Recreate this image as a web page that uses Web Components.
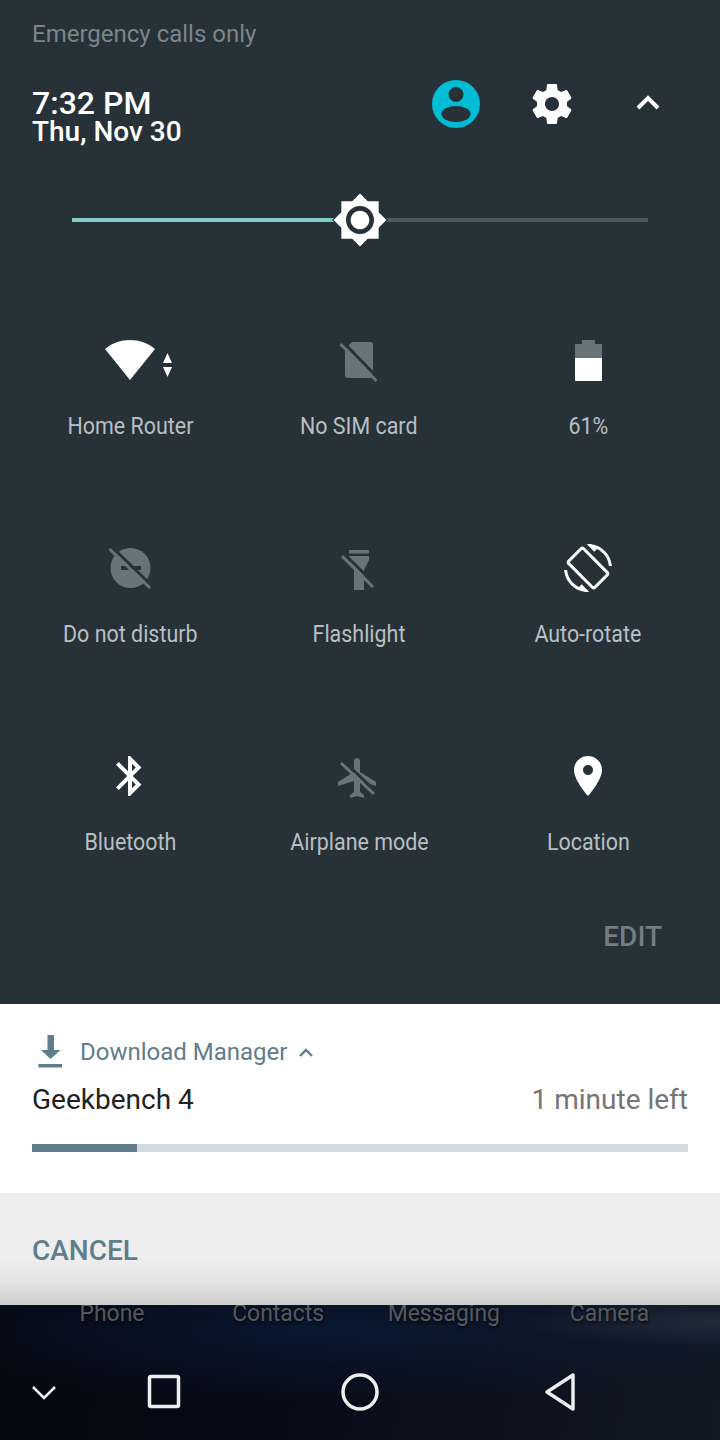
<!DOCTYPE html>
<html lang="en">
<head>
<meta charset="UTF-8">
<title>Quick settings</title>
<style>
  html, body { margin: 0; padding: 0; background: #05080f; }
  body { width: 720px; height: 1440px; overflow: hidden; font-family: Roboto, "Liberation Sans", sans-serif; }
  svg { display: block; }
</style>
</head>
<body>
<notification-shade>
  <qs-header slot="header"></qs-header>
  <brightness-slider slot="brightness" value="50"></brightness-slider>

  <qs-tile label="Home Router">
    <svg width="96" height="48" viewBox="0 0 96 48"><path fill="#fff" d="M23 13C30 7 39 4 48 4s18 3 25 9L48 44z"/><path fill="#fff" d="M81 27l4.500-10 4.500 10zM81 31h9l-4.500 10z"/></svg>
  </qs-tile>
  <qs-tile label="No SIM card" off>
    <svg width="48" height="48" viewBox="0 0 48 48"><path fill="#69747a" d="M17 6h18a3 3 0 0 1 3 3v30a3 3 0 0 1-3 3H13a3 3 0 0 1-3-3V13z"/><path stroke="#263238" stroke-width="3" d="M8 6l36 37"/><path stroke="#69747a" stroke-width="3" d="M5.500 8l36 37"/></svg>
  </qs-tile>
  <qs-tile label="61%">
    <svg width="48" height="48" viewBox="0 0 48 48"><path fill="#69747a" d="M18 4h13v4h7v14H11V8h7z"/><rect fill="#fff" x="11" y="22" width="27" height="23"/></svg>
  </qs-tile>

  <qs-tile label="Do not disturb" off>
    <svg width="48" height="48" viewBox="0 0 48 48"><circle fill="#69747a" cx="24.500" cy="24" r="20"/><path fill="#263238" d="M15 22h20v4H15z"/><path stroke="#263238" stroke-width="3" d="M6 3l40 39"/><path stroke="#69747a" stroke-width="3" d="M3.500 5l40.500 39"/></svg>
  </qs-tile>
  <qs-tile label="Flashlight" off>
    <svg width="48" height="48" viewBox="0 0 48 48"><path fill="#69747a" d="M14 6h20v3.500H14zM14 12h20v4l-5 10v20H19V26l-5-10z"/><path stroke="#263238" stroke-width="3" d="M9.500 10l31 31"/><path stroke="#69747a" stroke-width="3" d="M7 12l31 31"/></svg>
  </qs-tile>
  <qs-tile label="Auto-rotate">
    <svg width="48" height="48" viewBox="0 0 24 24"><path fill="#fff" d="M16.480 2.520c3.270 1.550 5.610 4.720 5.970 8.480h1.500C23.440 4.840 18.290 0 12 0l-.66.03 3.810 3.810 1.330-1.320zm-6.250-.77c-.59-.59-1.540-.59-2.120 0L1.750 8.110c-.59.59-.59 1.540 0 2.120l12.020 12.020c.59.59 1.540.59 2.120 0l6.360-6.360c.59-.59.59-1.540 0-2.120L10.230 1.750zm4.600 19.440L2.810 9.170l6.360-6.360 12.020 12.020-6.360 6.360zm-7.310.29C4.250 19.940 1.910 16.760 1.550 13H.05C.56 19.160 5.710 24 12 24l.66-.03-3.810-3.810-1.330 1.320z"/></svg>
  </qs-tile>

  <qs-tile label="Bluetooth">
    <svg width="48" height="48" viewBox="0 0 24 24"><path fill="#fff" d="M17.710 7.710L12 2h-1v7.590L6.410 5 5 6.410 10.590 12 5 17.590 6.410 19 11 14.410V22h1l5.710-5.710-4.300-4.290 4.300-4.290zM13 5.830l1.880 1.880L13 9.590V5.830zm1.880 10.460L13 18.170v-3.760l1.880 1.880z"/></svg>
  </qs-tile>
  <qs-tile label="Airplane mode" off>
    <svg width="48" height="48" viewBox="0 0 48 48"><path transform="translate(-1 2) scale(2)" fill="#69747a" d="M21 16v-2l-8-5V3.500c0-.83-.67-1.500-1.500-1.500S10 2.670 10 3.500V9l-8 5v2l8-2.500V19l-2 1.500V22l3.500-1 3.500 1v-1.500L13 19v-5.500l8 2.500z"/><path stroke="#263238" stroke-width="3" d="M8.500 9l33 31"/><path stroke="#69747a" stroke-width="3" d="M6 11l33 31"/></svg>
  </qs-tile>
  <qs-tile label="Location">
    <svg width="48" height="48" viewBox="0 0 24 24"><path fill="#fff" d="M12 2C8.130 2 5 5.130 5 9c0 5.250 7 13 7 13s7-7.750 7-13c0-3.870-3.130-7-7-7zm0 9.500c-1.380 0-2.500-1.120-2.500-2.500s1.120-2.500 2.500-2.500 2.500 1.120 2.500 2.500-1.120 2.500-2.500 2.500z"/></svg>
  </qs-tile>
</notification-shade>

<download-card app="Download Manager" title="Geekbench 4" eta="1 minute left" progress="16"></download-card>
<card-actions>CANCEL</card-actions>
<home-strip></home-strip>

<script>
// status line, clock and the three header buttons
class QsHeader extends HTMLElement {
  constructor() {
    super();
    const shadow = this.attachShadow({mode: 'open'});
    shadow.innerHTML = `
      <style>
        :host { display: block; height: 168px; box-sizing: border-box; padding: 18px 32px 0; }
        .carrier { font-size: 24px; line-height: 32px; color: #7b858a; }
        .row { display: flex; align-items: flex-start; margin-top: 30px; }
        .clock { flex: 1; color: #fff; padding-top: 8px; font-weight: 500; }
        .time { font-size: 32px; line-height: 30px; }
        .date { font-size: 28px; line-height: 28px; }
        .btns { display: flex; margin-right: -8px; }
        .btns div { width: 96px; height: 48px; display: flex; justify-content: center; }
      </style>
      <div class="carrier">Emergency calls only</div>
      <div class="row">
        <div class="clock">
          <div class="time">7:32 PM</div>
          <div class="date">Thu, Nov 30</div>
        </div>
        <div class="btns">
          <div><svg width="48" height="48" viewBox="0 0 48 48"><circle cx="24" cy="24" r="24" fill="#00bcd4"/><circle cx="24" cy="14.500" r="7.500" fill="#263238"/><ellipse cx="24" cy="34" rx="14.500" ry="8" fill="#263238"/></svg></div>
          <div><svg width="48" height="48" viewBox="0 0 24 24"><path fill="#fff" d="M19.430 12.980c.04-.32.07-.64.07-.98s-.03-.66-.07-.98l2.110-1.650c.19-.15.24-.42.12-.64l-2-3.460c-.12-.22-.39-.3-.61-.22l-2.490 1c-.52-.4-1.080-.73-1.690-.98l-.38-2.650C14.460 2.180 14.250 2 14 2h-4c-.25 0-.46.18-.49.42l-.38 2.650c-.61.25-1.170.59-1.690.98l-2.490-1c-.23-.09-.49 0-.61.22l-2 3.460c-.13.22-.07.49.12.64l2.110 1.650c-.04.32-.07.65-.07.98s.03.66.07.98l-2.110 1.650c-.19.15-.24.42-.12.64l2 3.460c.12.22.39.3.61.22l2.490-1c.52.4 1.080.73 1.690.98l.38 2.650c.03.24.24.42.49.42h4c.25 0 .46-.18.49-.42l.38-2.650c.61-.25 1.170-.59 1.690-.98l2.490 1c.23.09.49 0 .61-.22l2-3.460c.12-.22.07-.49-.12-.64l-2.110-1.650zM12 15.500c-1.930 0-3.500-1.570-3.500-3.500s1.570-3.500 3.500-3.500 3.500 1.570 3.500 3.500-1.570 3.500-3.500 3.500z"/></svg></div>
          <div><svg width="48" height="48" viewBox="0 0 48 48"><path fill="none" stroke="#fff" stroke-width="4" d="M14 28l10-10 10 10"/></svg></div>
        </div>
      </div>`;
  }
}

class BrightnessSlider extends HTMLElement {
  constructor() {
    super();
    const shadow = this.attachShadow({mode: 'open'});
    const value = this.getAttribute('value') || 0;
    shadow.innerHTML = `
      <style>
        :host { display: block; padding: 50px 72px 0; height: 104px; box-sizing: border-box; }
        .track { position: relative; height: 4px; background: #4f5a60; }
        .fill { height: 100%; background: #80cbc4; width: ${value}%; }
        svg { position: absolute; left: ${value}%; top: 50%; transform: translate(-50%, -50%); }
      </style>
      <div class="track"><div class="fill"></div>
        <svg width="56" height="56" viewBox="0 0 24 24"><path fill="#263238" d="M12 0L24 12 12 24 0 12z"/><path fill="#fff" d="M20 8.690V4h-4.690L12 .69 8.690 4H4v4.690L.69 12 4 15.310V20h4.690L12 23.310 15.310 20H20v-4.690L23.310 12 20 8.690zM12 18c-3.310 0-6-2.690-6-6s2.690-6 6-6 6 2.690 6 6-2.690 6-6 6zm0-10c-2.210 0-4 1.790-4 4s1.790 4 4 4 4-1.790 4-4-1.790-4-4-4z"/></svg>
      </div>`;
  }
}

class QsTile extends HTMLElement {
  constructor() {
    super();
    const shadow = this.attachShadow({mode: 'open'});
    shadow.innerHTML = `
      <style>
        :host { display: flex; flex-direction: column; align-items: center; height: 208px; }
        .icon { height: 48px; display: flex; justify-content: center; }
        .label { margin-top: 26px; font-size: 24px; line-height: 32px; color: #b9bfc2; white-space: nowrap; transform: scaleX(.893); }
      </style>
      <div class="icon"><slot></slot></div>
      <div class="label">${this.getAttribute('label')}</div>`;
  }
}

class NotificationShade extends HTMLElement {
  constructor() {
    super();
    const shadow = this.attachShadow({mode: 'open'});
    shadow.innerHTML = `
      <style>
        :host { display: block; height: 1004px; background: #263238; overflow: hidden; }
        .grid { display: grid; grid-template-columns: 228px 230px 228px; padding: 64px 0 0 16px; }
        .edit { font-size: 28px; font-weight: 500; line-height: 32px; color: #737d83; text-align: right; padding: 5px 58px 0 0; margin-top: -44px; }
      </style>
      <slot name="header"></slot>
      <slot name="brightness"></slot>
      <div class="grid"><slot></slot></div>
      <div class="edit">EDIT</div>`;
  }
}

class DownloadCard extends HTMLElement {
  constructor() {
    super();
    const shadow = this.attachShadow({mode: 'open'});
    const g = n => this.getAttribute(n);
    shadow.innerHTML = `
      <style>
        :host { display: block; height: 189px; box-sizing: border-box; background: #fff; padding: 30px 32px 0; }
        .app { display: flex; align-items: center; height: 36px; color: #607d8b; font-size: 24px; }
        .app .name { margin-left: 12px; }
        .app .caret { margin-left: 10px; }
        .main { display: flex; justify-content: space-between; margin-top: 10px; font-size: 28px; line-height: 40px; }
        .title { color: #212121; }
        .eta { color: #757575; }
        .bar { margin-top: 24px; height: 8px; background: #d3dbde; }
        .bar div { height: 100%; width: ${g('progress')}%; background: #607d8b; }
      </style>
      <div class="app">
        <svg width="36" height="36" viewBox="0 0 36 36"><path fill="#607d8b" d="M15.500 1H22v15h6.500L18.500 25 9 16h6.500zM6.500 30H30v3.500H6.500z"/></svg>
        <span class="name">${g('app')}</span>
        <svg class="caret" width="18" height="18" viewBox="0 0 18 18"><path fill="none" stroke="#607d8b" stroke-width="2.400" d="M3 13l6-6 6 6"/></svg>
      </div>
      <div class="main"><span class="title">${g('title')}</span><span class="eta">${g('eta')}</span></div>
      <div class="bar"><div></div></div>`;
  }
}

class CardActions extends HTMLElement {
  constructor() {
    super();
    const shadow = this.attachShadow({mode: 'open'});
    shadow.innerHTML = `
      <style>
        :host { display: block; height: 112px; box-sizing: border-box; padding: 42px 32px 0;
          background: linear-gradient(#eeeeee 0, #eeeeee 58%, #e4e4e4 78%, #cfcfcf 100%);
          color: #607d8b; font-size: 28px; font-weight: 500; line-height: 32px; }
      </style>
      <slot></slot>`;
  }
}

// wallpaper with the dimmed dock labels and the nav bar
class HomeStrip extends HTMLElement {
  constructor() {
    super();
    const shadow = this.attachShadow({mode: 'open'});
    shadow.innerHTML = `
      <style>
        :host { display: block; height: 135px; overflow: hidden;
          background:
            radial-gradient(200px 24px at 710px 18px, rgba(90,100,115,.22), transparent),
            radial-gradient(460px 70px at 320px 25px, rgba(12,32,70,.55), transparent),
            linear-gradient(100deg, #04070e 0, #070c18 45%, #111925 100%); }
        .dock { display: grid; grid-template-columns: repeat(4, 166px); margin-top: -8px; padding-left: 29px;
          font-size: 24px; line-height: 32px; color: #55595d; text-shadow: 1px 2px 3px rgba(0,0,0,.7); }
        .dock span { justify-self: center; transform: scaleX(.955); }
        .nav { display: flex; margin-top: 39px; height: 48px; }
        .nav svg { flex: none; }
      </style>
      <div class="dock"><span>Phone</span><span>Contacts</span><span>Messaging</span><span>Camera</span></div>
      <div class="nav">
        <svg style="margin-left:20px" width="48" height="48" viewBox="0 0 48 48"><path fill="none" stroke="#eee" stroke-width="2.600" d="M13 19l11 11 11-11"/></svg>
        <svg style="margin-left:76px" width="40" height="48" viewBox="0 0 40 48"><rect x="5.500" y="8.500" width="29" height="30" rx="1.500" fill="none" stroke="#eee" stroke-width="3.500"/></svg>
        <svg style="margin-left:154px" width="44" height="48" viewBox="0 0 44 48"><circle cx="22" cy="24" r="17" fill="none" stroke="#eee" stroke-width="3.500"/></svg>
        <svg style="margin-left:156px" width="44" height="48" viewBox="0 0 44 48"><path fill="none" stroke="#eee" stroke-width="3.500" stroke-linejoin="round" d="M35 7v34L9 24z"/></svg>
      </div>`;
  }
}

customElements.define('qs-header', QsHeader);
customElements.define('brightness-slider', BrightnessSlider);
customElements.define('qs-tile', QsTile);
customElements.define('notification-shade', NotificationShade);
customElements.define('download-card', DownloadCard);
customElements.define('card-actions', CardActions);
customElements.define('home-strip', HomeStrip);
</script>
</body>
</html>
